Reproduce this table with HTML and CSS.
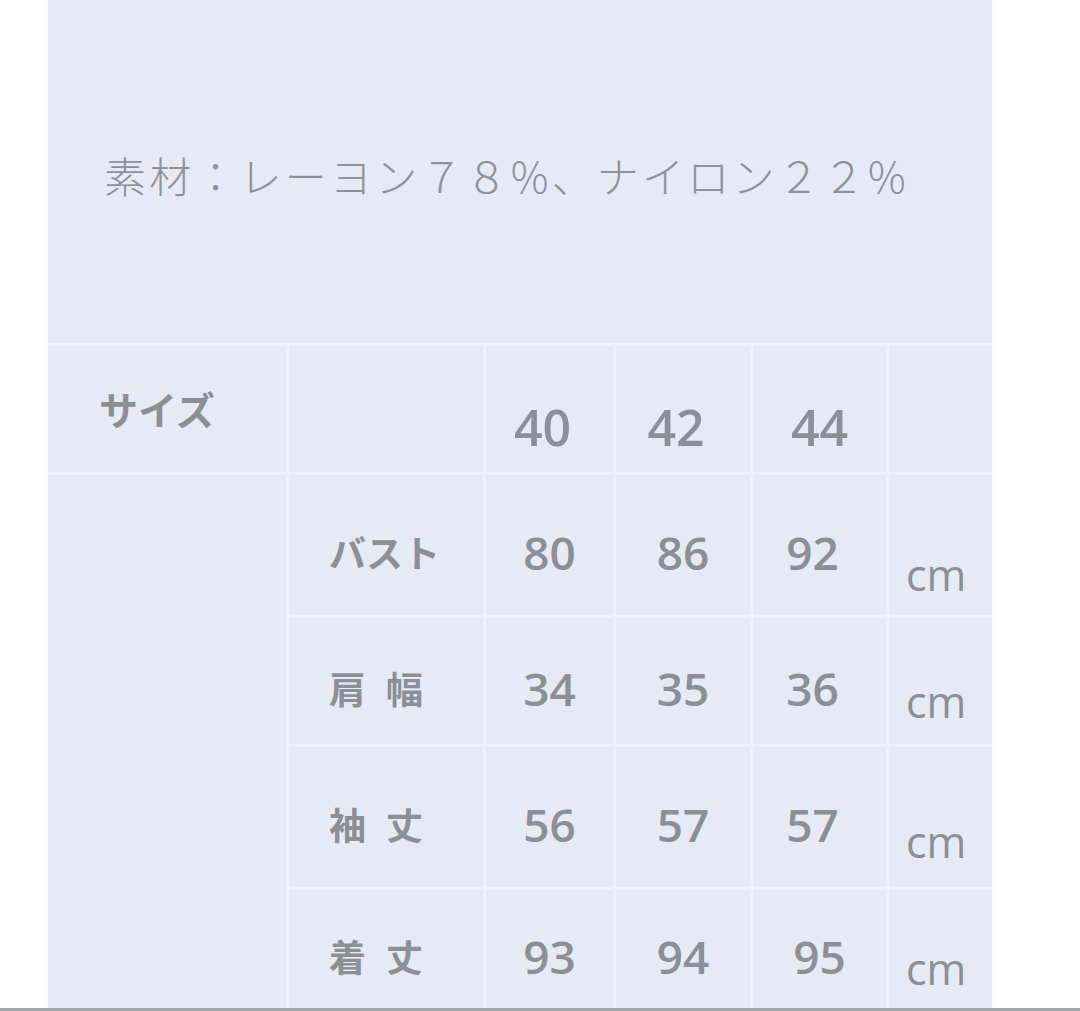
FILE: index.html
```html
<!DOCTYPE html>
<html lang="ja">
<head>
<meta charset="utf-8">
<title>サイズ表</title>
<link rel="stylesheet" href="styles.css">
</head>
<body>
<div class="page">
  <div class="panel">
    <div class="material">素材：レーヨン７８%、ナイロン２２%</div>
    <div class="table">
      <div class="cell head-label">サイズ</div>
      <div class="cell"></div>
      <div class="cell head-num shift-l">40</div>
      <div class="cell head-num shift-l">42</div>
      <div class="cell head-num">44</div>
      <div class="cell"></div>

      <div class="cell side"></div>

      <div class="cell label">バスト</div>
      <div class="cell num">80</div>
      <div class="cell num">86</div>
      <div class="cell num shift-l">92</div>
      <div class="cell unit u1">cm</div>

      <div class="cell label spaced">肩幅</div>
      <div class="cell num">34</div>
      <div class="cell num">35</div>
      <div class="cell num shift-l">36</div>
      <div class="cell unit u2">cm</div>

      <div class="cell label spaced">袖丈</div>
      <div class="cell num">56</div>
      <div class="cell num">57</div>
      <div class="cell num shift-l">57</div>
      <div class="cell unit u3">cm</div>

      <div class="cell label spaced">着丈</div>
      <div class="cell num">93</div>
      <div class="cell num">94</div>
      <div class="cell num">95</div>
      <div class="cell unit u4">cm</div>
    </div>
  </div>
  <div class="rule"></div>
</div>
</body>
</html>
```
FILE: styles.css
```css
html, body {
  margin: 0;
  padding: 0;
  background: #ffffff;
}

.page {
  width: 1080px;
  height: 1011px;
  overflow: hidden;
  display: flex;
  flex-direction: column;
}

.panel {
  margin-left: 48px;
  width: 944px;
  height: 1008px;
  background: #e7eaf5;
  box-shadow: 0 0 6px rgba(120, 130, 160, 0.08);
  overflow: hidden;
  flex: none;
}

.material {
  height: 343px;
  box-sizing: border-box;
  padding-top: 150px;
  padding-left: 56px;
  font-family: "Noto Sans CJK JP", "Noto Sans", sans-serif;
  font-weight: 300;
  font-size: 42px;
  line-height: 50px;
  letter-spacing: 3.2px;
  color: #8f9299;
  white-space: nowrap;
}

.table {
  display: grid;
  grid-template-columns: 238px 194px 127px 134px 133px 103px;
  grid-template-rows: 126px 140px 126px 140px 118px;
  gap: 3px;
  border-top: 3px solid #eff2fa;
  background: #eff2fa;
}

.cell {
  background: #e7eaf5;
  display: flex;
  align-items: center;
  justify-content: center;
  color: #8c8f96;
}

.side {
  grid-column: 1;
  grid-row: 2 / span 4;
}

.shift-l {
  padding-right: 14px;
}

.head-label {
  justify-content: flex-start;
  align-items: flex-start;
  padding-left: 51px;
  padding-top: 43px;
  font-family: "Noto Sans CJK JP", "Noto Sans", sans-serif;
  font-weight: 700;
  font-size: 39px;
  line-height: 1;
}

.head-num {
  align-items: flex-start;
  padding-top: 56px;
  font-family: "Open Sans", "DejaVu Sans", sans-serif;
  font-weight: 600;
  font-size: 50px;
  line-height: 1;
}

.label {
  justify-content: flex-start;
  padding-left: 40px;
  padding-top: 14px;
  font-family: "Noto Sans CJK JP", "Noto Sans", sans-serif;
  font-weight: 700;
  font-size: 37px;
  line-height: 1;
}

.spaced {
  letter-spacing: 20px;
}

.num {
  padding-top: 14px;
  font-family: "Open Sans", "DejaVu Sans", sans-serif;
  font-weight: 600;
  font-size: 46px;
  line-height: 1;
}

.unit {
  justify-content: flex-start;
  align-items: flex-start;
  padding-left: 17px;
  font-family: "Open Sans", "DejaVu Sans", sans-serif;
  font-weight: 400;
  font-size: 43px;
  line-height: 1;
}

.u1 { padding-top: 78px; }
.u2 { padding-top: 62px; }
.u3 { padding-top: 73px; }
.u4 { padding-top: 57px; }

.rule {
  height: 3px;
  background: #a4a5aa;
  flex: none;
}
```
